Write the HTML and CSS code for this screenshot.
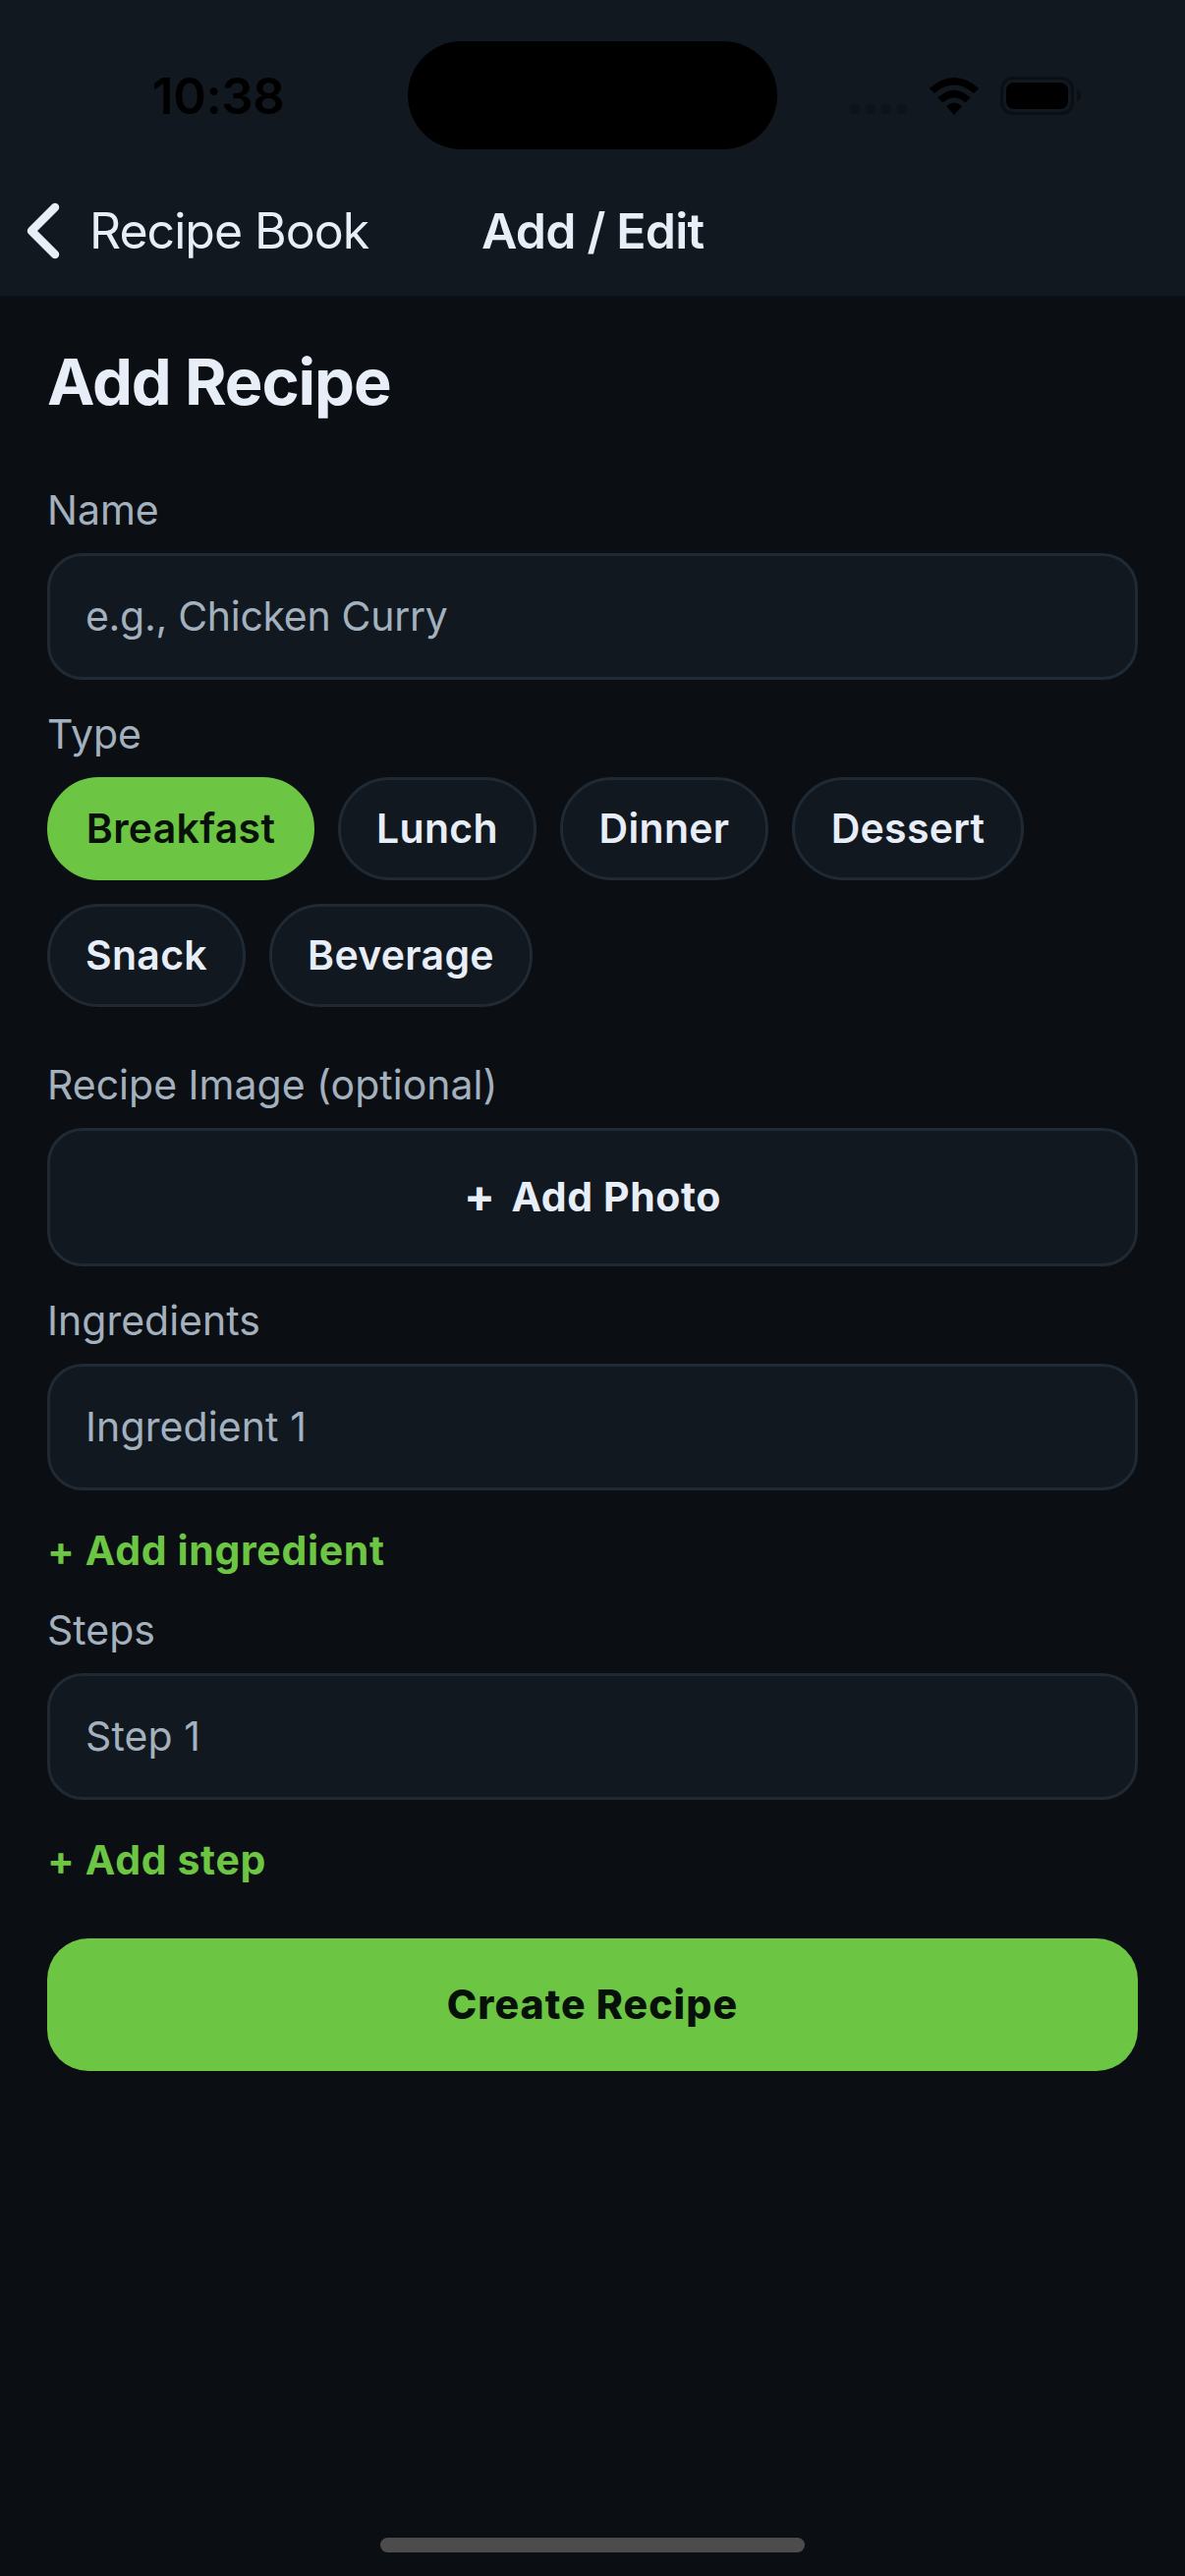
FILE: index.html
```html
<!DOCTYPE html>
<html lang="en">
<head>
<meta charset="utf-8">
<title>Add / Edit</title>
<link rel="stylesheet" href="styles.css">
</head>
<body>
<div class="screen">
  <header class="header">
    <div class="status">
      <div class="time">10:38</div>
      <div class="island"></div>
      <div class="indicators">
        <svg class="dots" width="58" height="12" viewBox="0 0 58 12"><g fill="#0d131b"><rect width="10" height="10" x="0" y="1" rx="4"/><rect width="10" height="10" x="16" y="1" rx="4"/><rect width="10" height="10" x="32" y="1" rx="4"/><rect width="10" height="10" x="48" y="1" rx="4"/></g></svg>
        <svg class="wifi" width="52" height="38" viewBox="0 0 52 38"><path d="M26 38 18 29Q26 22 34 29ZM9.500 20.500Q26 5 42.500 20.500L37.500 25.500Q26 15.500 14.500 25.500ZM.8 11Q26-11 51.200 11L46 16Q26-.8 6 16Z"/></svg>
        <svg class="battery" width="83" height="39" viewBox="0 0 83 39"><rect x="1.500" y="1.500" width="72" height="36" rx="11.500" fill="none" stroke="#0b0f14" stroke-width="3"/><rect x="6" y="6" width="63" height="27" rx="8"/><path d="M78 13.500Q82 15 82 19.500T78 25.500Z" fill="#0b0f14"/></svg>
      </div>
    </div>
    <nav class="nav">
      <svg class="chevron" width="34" height="58" viewBox="0 0 34 58"><path d="M29 5 5 29l24 24" fill="none" stroke="#e8eef8" stroke-width="8.500" stroke-linecap="round" stroke-linejoin="round"/></svg>
      <span class="back">Recipe Book</span>
      <span class="nav-title">Add / Edit</span>
    </nav>
  </header>
  <main class="form">
    <h1 class="title">Add Recipe</h1>
    <div class="label">Name</div>
    <div class="field field-name">e.g., Chicken Curry</div>
    <div class="label">Type</div>
    <div class="chips">
      <div class="chip chip-on w-breakfast">Breakfast</div>
      <div class="chip w-lunch">Lunch</div>
      <div class="chip w-dinner">Dinner</div>
      <div class="chip w-dessert">Dessert</div>
      <div class="chip w-snack">Snack</div>
      <div class="chip w-beverage">Beverage</div>
    </div>
    <div class="label label-image">Recipe Image (optional)</div>
    <div class="field photo"><span class="plus">+</span><span>Add Photo</span></div>
    <div class="label">Ingredients</div>
    <div class="field">Ingredient 1</div>
    <div class="add">+ Add ingredient</div>
    <div class="label">Steps</div>
    <div class="field">Step 1</div>
    <div class="add">+ Add step</div>
    <div class="submit">Create Recipe</div>
  </main>
  <div class="home"></div>
</div>
</body>
</html>
```
FILE: styles.css
```css
* { box-sizing: border-box; }
body {
  margin: 0;
  background: #0b0e12;
  color: #e8eef8;
  font-family: Inter, "Liberation Sans", sans-serif;
  font-size: 41px;
  line-height: 51px;
}
svg { display: block; flex: none; }
.screen {
  width: 1206px;
  height: 2622px;
  display: flex;
  flex-direction: column;
  overflow: hidden;
  white-space: nowrap;
}
.header { height: 302px; background: #111820; border-bottom: 1px solid #0d1217; }
.status {
  height: 193px;
  padding-top: 42px;
  display: grid;
  grid-template-columns: 415px 376px 415px;
  align-items: start;
}
.time { padding: 25px 0 0 155px; color: #000; font-size: 51px; line-height: 62px; font-weight: 600; letter-spacing: -0.4px; }
.island { height: 110px; border-radius: 55px; background: #000; }
.indicators { display: flex; padding: 36px 0 0 74px; }
.dots { margin-top: 27px; }
.wifi { margin: 1px 0 0 22px; }
.battery { margin-left: 21px; }
.nav { display: flex; height: 83px; padding-left: 27px; line-height: 62px; font-size: 50px; }
.chevron { margin-top: 13px; }
.back { width: 396px; padding: 11px 0 0 30px; letter-spacing: -1px; }
.nav-title { padding-top: 11px; margin-left: 33px; font-weight: 600; letter-spacing: -0.8px; }
.form { flex: 1; padding: 48px 48px 0; }
.title { margin: 0 0 66px; font-size: 65px; line-height: 78px; font-weight: 700; letter-spacing: -1.1px; }
.label { margin-bottom: 18px; color: #a3b1bf; }
.label-image { margin-top: 54px; }
.field {
  height: 129px;
  margin-bottom: 30px;
  padding: 36px 36px 0;
  border: 3px solid #1f2a35;
  border-radius: 36px;
  background: #111820;
  color: #a3b1bf;
  letter-spacing: 0.1px;
}
.field-name { letter-spacing: -0.3px; }
.photo {
  height: 141px;
  padding-top: 42px;
  display: flex;
  justify-content: center;
  gap: 16px;
  color: #e8eef8;
  font-weight: 700;
  letter-spacing: 0.6px;
}
.plus { font-size: 47px; line-height: 47px; }
.chips { display: flex; flex-wrap: wrap; gap: 24px; }
.chip {
  height: 105px;
  padding-top: 24px;
  border: 3px solid #1f2a35;
  border-radius: 53px;
  background: #111820;
  font-weight: 600;
  letter-spacing: 0.3px;
  text-align: center;
}
.chip-on { background: #6cc644; border-color: #6cc644; color: #07110a; }
.w-breakfast { width: 272px; }
.w-lunch { width: 202px; }
.w-dinner { width: 212px; }
.w-dessert { width: 236px; }
.w-snack { width: 202px; }
.w-beverage { width: 268px; }
.add { margin: 36px 0 30px; color: #6cc644; font-weight: 700; letter-spacing: 0.65px; }
.submit {
  height: 135px;
  margin-top: 54px;
  padding-top: 42px;
  border-radius: 42px;
  background: #6cc644;
  color: #07110a;
  font-weight: 800;
  letter-spacing: 1.05px;
  text-align: center;
}
.home { width: 432px; height: 15px; margin: 0 auto 24px; border-radius: 8px; background: #4c4c4c; }
```
